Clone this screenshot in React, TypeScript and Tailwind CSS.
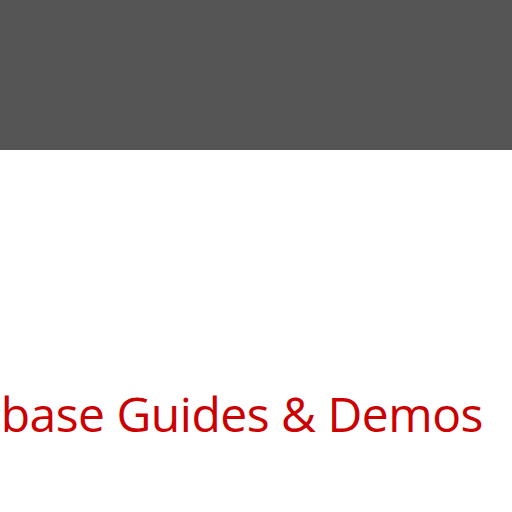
export default function App() {
  return (
    <div className="w-[512px] h-[512px] bg-white overflow-hidden flex flex-col">
      <div className="h-[150px] bg-[#555555] shrink-0" />
      <div className="flex justify-end pr-[29px] pt-[234px] overflow-hidden">
        <h1
          className="whitespace-nowrap text-[48px] leading-[60px] tracking-[-0.5px] text-[#cc0000] shrink-0"
          style={{ fontFamily: '"Open Sans", sans-serif' }}
        >
          Couchbase Guides &amp; Demos
        </h1>
      </div>
    </div>
  );
}
